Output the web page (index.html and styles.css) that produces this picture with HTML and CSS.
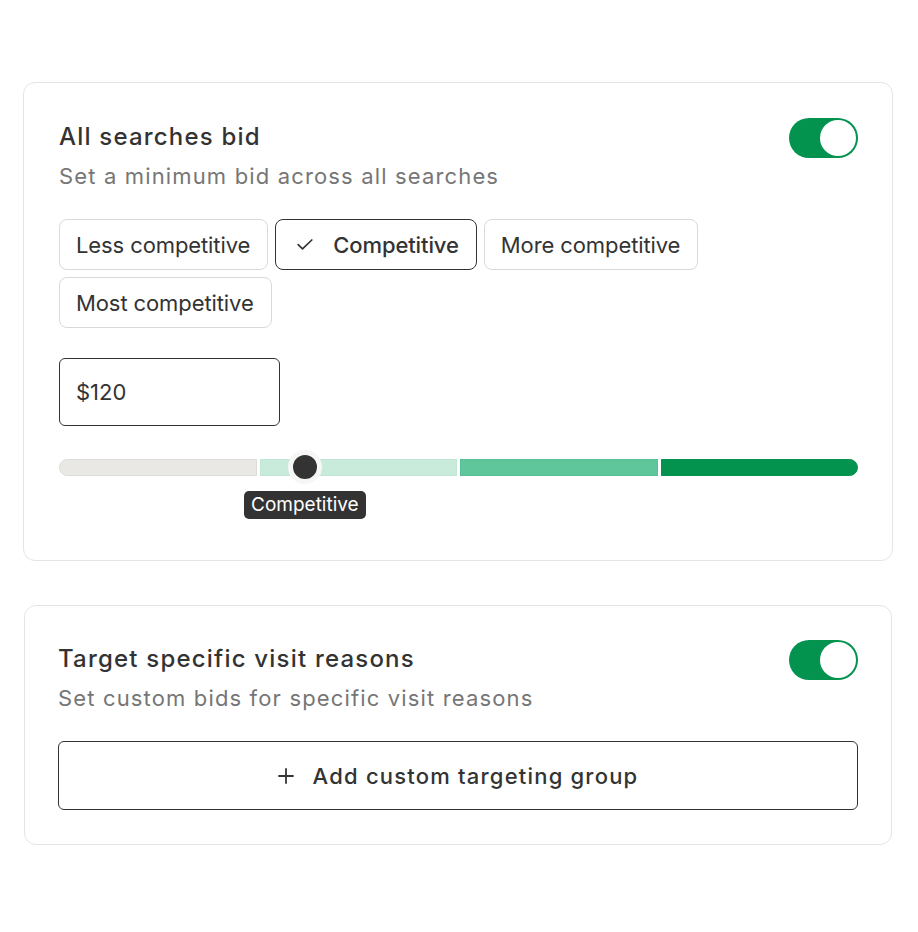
FILE: index.html
```html
<!DOCTYPE html>
<html lang="en">
<head>
<meta charset="utf-8">
<title>Bids</title>
<link rel="stylesheet" href="styles.css">
</head>
<body>
<main class="page">
  <section class="card card-bid">
    <div class="card-head">
      <div class="card-text">
        <h2 class="card-title">All searches bid</h2>
        <p class="card-sub">Set a minimum bid across all searches</p>
      </div>
      <div class="toggle on" role="switch" aria-checked="true"><span class="knob"></span></div>
    </div>
    <div class="chips">
      <button class="chip">Less competitive</button>
      <button class="chip selected"><svg class="check" viewBox="0 0 16 11" width="16" height="11"><path d="M1.2 5.6l4.3 4.2L14.8 1" fill="none" stroke="#333" stroke-width="1.7" stroke-linecap="round" stroke-linejoin="round"/></svg>Competitive</button>
      <button class="chip">More competitive</button>
      <button class="chip">Most competitive</button>
    </div>
    <div class="amount">$120</div>
    <div class="slider">
      <div class="track">
        <span class="seg seg1"></span>
        <span class="seg seg2"></span>
        <span class="seg seg3"></span>
        <span class="seg seg4"></span>
      </div>
      <span class="thumb"></span>
      <span class="tip">Competitive</span>
    </div>
  </section>

  <section class="card card-target">
    <div class="card-head">
      <div class="card-text">
        <h2 class="card-title">Target specific visit reasons</h2>
        <p class="card-sub">Set custom bids for specific visit reasons</p>
      </div>
      <div class="toggle on" role="switch" aria-checked="true"><span class="knob"></span></div>
    </div>
    <button class="add-btn"><svg class="plus" viewBox="0 0 16 16" width="16" height="16"><path d="M8 1v14M1 8h14" fill="none" stroke="#333" stroke-width="1.8" stroke-linecap="round"/></svg>Add custom targeting group</button>
  </section>
</main>
</body>
</html>
```
FILE: styles.css
```css
* { box-sizing: border-box; }
html, body { margin: 0; padding: 0; background: #fff; }
body {
  font-family: "Inter", "Liberation Sans", sans-serif;
  color: #333;
}
.page {
  padding: 82px 25px 0 23px;
  display: flex;
  flex-direction: column;
  gap: 44px;
}
.card {
  border: 1px solid #e4e4e4;
  border-radius: 12px;
  background: #fff;
}
.card-bid { padding: 35px 34px 41px 35px; }
.card-target { margin: 0 1px; padding: 34px 33px 34px 33px; }

.card-head {
  display: flex;
  justify-content: space-between;
  align-items: flex-start;
}
.card-title {
  margin: 0;
  font-size: 24px;
  line-height: 38px;
  font-weight: 500;
  color: #333;
  letter-spacing: 1.2px;
}
.card-sub {
  margin: 0;
  font-size: 22px;
  line-height: 40px;
  font-weight: 400;
  color: #767676;
  letter-spacing: 1.15px;
}
.toggle {
  width: 69px;
  height: 40px;
  border-radius: 20px;
  background: #03934f;
  position: relative;
  flex: none;
}
.toggle .knob {
  position: absolute;
  right: 2px;
  top: 2px;
  width: 36px;
  height: 36px;
  border-radius: 50%;
  background: #fff;
}

.chips {
  display: flex;
  flex-wrap: wrap;
  gap: 7px;
  margin-top: 23px;
  width: 660px;
}
.chip {
  font-family: inherit;
  font-size: 22px;
  color: #333;
  background: #fff;
  border: 1.5px solid #d9d9d9;
  border-radius: 8px;
  height: 51px;
  padding: 0 17px 0 16px;
  display: flex;
  align-items: center;
  gap: 20px;
  letter-spacing: -0.1px;
}
.chip.selected {
  border-color: #333;
  font-weight: 500;
  padding: 0 17px 0 21px;
}
.check { flex: none; }

.amount {
  margin-top: 30px;
  width: 221px;
  height: 68px;
  border: 1.5px solid #333;
  border-radius: 6px;
  font-size: 22px;
  display: flex;
  align-items: center;
  padding-left: 16px;
  color: #333;
}

.slider {
  position: relative;
  margin-top: 33px;
  height: 60px;
}
.track {
  display: flex;
  gap: 3px;
  height: 17px;
}
.seg {
  flex: 1;
  height: 100%;
  border: 1px solid transparent;
}
.seg1 { background: #e9e8e5; border-color: #dcdcd9; border-radius: 9px 0 0 9px; }
.seg2 { background: #c9ebdb; border-color: #c1e6d4; }
.seg3 { background: #5fc59b; border-color: #57c094; }
.seg4 { background: #03934f; border-color: #03934f; border-radius: 0 9px 9px 0; }
.thumb {
  position: absolute;
  left: 229px;
  top: -9px;
  width: 34px;
  height: 34px;
  border-radius: 50%;
  background: #333;
  border: 5px solid #f6f6f4;
}
.tip {
  position: absolute;
  left: 185px;
  top: 32px;
  height: 28px;
  padding: 0 7px;
  background: #333;
  color: #fff;
  border-radius: 5px;
  font-size: 19px;
  line-height: 28px;
  letter-spacing: 0;
}

.add-btn {
  margin-top: 23px;
  width: 100%;
  height: 69px;
  border: 1.5px solid #333;
  border-radius: 6px;
  background: #fff;
  font-family: inherit;
  font-size: 22px;
  font-weight: 500;
  color: #333;
  display: flex;
  align-items: center;
  justify-content: center;
  gap: 19px;
  letter-spacing: 1.2px;
}
.plus { flex: none; }
```
